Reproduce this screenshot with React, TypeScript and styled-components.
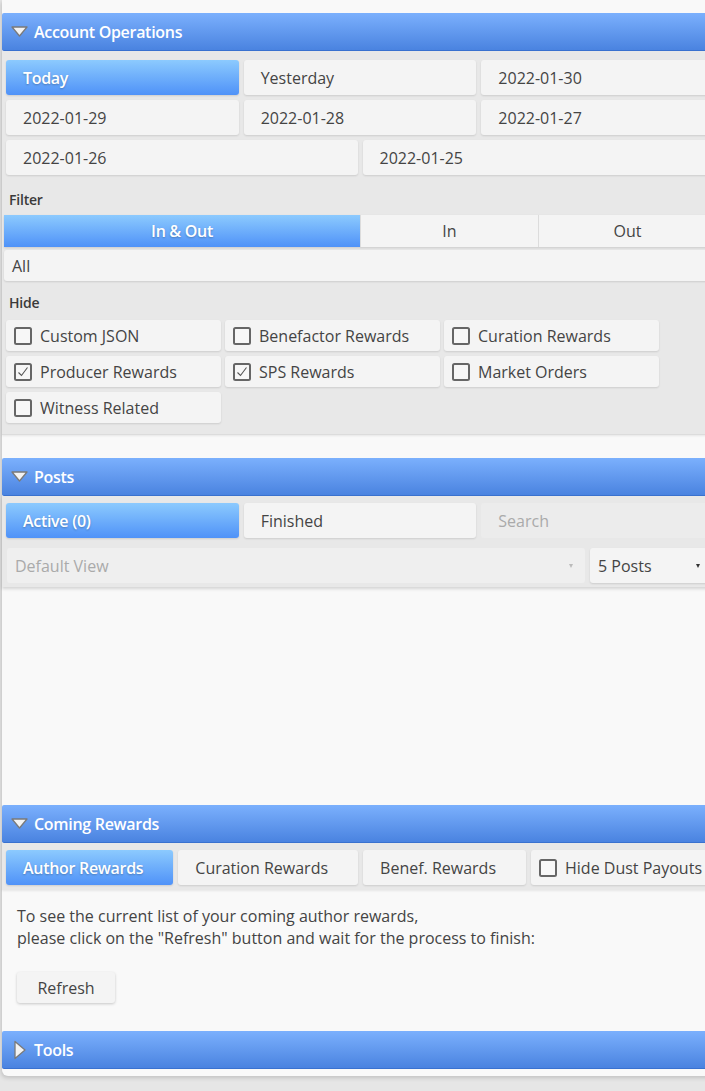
import React from 'react';
import styled, { createGlobalStyle } from 'styled-components';

const GlobalStyle = createGlobalStyle`
  html, body {
    margin: 0;
    padding: 0;
    background: #e6e6e6;
    overflow-x: hidden;
  }
  body {
    font-family: "Open Sans", "Noto Sans", "Liberation Sans", sans-serif;
    color: #444;
  }
`;

const Page = styled.div`
  width: 716px;
  margin-left: 2px;
  padding-top: 13px;
  background: #f9f9f9;
  border-radius: 0 0 6px 6px;
  box-shadow: -1px 2px 4px rgba(0, 0, 0, 0.16);
  padding-bottom: 7px;
  margin-bottom: 20px;
`;

const Header = styled.div`
  height: 37px;
  display: flex;
  align-items: center;
  gap: 5px;
  padding-left: 8px;
  background: linear-gradient(#7bb0fd, #4a83e0);
  border-bottom: 1px solid #3a72d0;
  border-radius: 2px 0 0 2px;
  color: #fff;
  font-size: 16px;
  font-weight: 600;
  letter-spacing: -0.3px;

  svg {
    flex: none;
    display: block;
  }
`;

const Section = styled.section<{ $gap?: number }>`
  margin-bottom: ${p => p.$gap ?? 0}px;
`;

const GrayBody = styled.div`
  background: #e8e8e8;
  padding: 9px 4px 11px 4px;
  border-bottom: 1px solid #dcdcdc;
  box-shadow: 0 1px 2px rgba(0, 0, 0, 0.08);
`;

const Grid = styled.div<{ $cols: number }>`
  display: grid;
  grid-template-columns: repeat(${p => p.$cols}, 1fr);
  gap: 5px;
  margin-bottom: 5px;
`;

const Btn = styled.button<{ $active?: boolean }>`
  height: 35px;
  border: none;
  border-radius: 3px;
  padding: 0 30px 0 17px;
  text-align: left;
  font-family: inherit;
  font-size: 16px;
  white-space: nowrap;
  color: ${p => (p.$active ? '#fff' : '#444')};
  font-weight: ${p => (p.$active ? 600 : 400)};
  text-shadow: ${p => (p.$active ? '0 1px 2px rgba(0,0,0,0.25)' : 'none')};
  letter-spacing: ${p => (p.$active ? '-0.3px' : '0')};
  background: ${p => (p.$active ? 'linear-gradient(#8ccafe, #4f92f8)' : '#f4f4f4')};
  box-shadow: 0 1px 2px rgba(0, 0, 0, 0.12);
`;

const Label = styled.div<{ $top: number; $bottom: number }>`
  font-size: 14px;
  line-height: 20px;
  font-weight: 600;
  color: #3a3a3a;
  padding: ${p => p.$top}px 0 ${p => p.$bottom}px 3px;
  letter-spacing: -0.2px;
`;

const FilterTabs = styled.div`
  display: grid;
  grid-template-columns: 2fr 1fr 1fr;
  margin: 0 -2px;
  box-shadow: 0 1px 2px rgba(0, 0, 0, 0.12);
`;

const FilterTab = styled.div<{ $active?: boolean }>`
  height: 32px;
  display: flex;
  align-items: center;
  justify-content: center;
  font-size: 16px;
  color: ${p => (p.$active ? '#fff' : '#444')};
  font-weight: ${p => (p.$active ? 600 : 400)};
  letter-spacing: ${p => (p.$active ? '-0.3px' : '0')};
  text-shadow: ${p => (p.$active ? '0 1px 2px rgba(0,0,0,0.25)' : 'none')};
  background: ${p => (p.$active ? 'linear-gradient(#8ccafe, #4f92f8)' : '#f4f4f4')};
  border-left: ${p => (p.$active ? 'none' : '1px solid #dcdcdc')};
`;

const Select = styled.div<{ $disabled?: boolean; $tall?: boolean }>`
  height: ${p => (p.$tall ? 35 : 31)}px;
  display: flex;
  align-items: center;
  justify-content: space-between;
  padding: 0 4px 0 8px;
  border-radius: 3px;
  font-size: 16px;
  background: ${p => (p.$disabled ? '#efefef' : '#f4f4f4')};
  color: ${p => (p.$disabled ? '#aaa' : '#444')};
  box-shadow: ${p => (p.$disabled ? 'none' : '0 1px 2px rgba(0,0,0,0.12)')};
`;

const FilterSelect = styled(Select)`
  margin: 3px -2px 0;
`;

const Caret = styled.span<{ $light?: boolean; $inset?: number }>`
  width: 0;
  height: 0;
  border-left: 2.5px solid transparent;
  border-right: 2.5px solid transparent;
  border-top: 4px solid ${p => (p.$light ? '#bbb' : '#333')};
  margin-right: ${p => p.$inset ?? 0}px;
`;

const CheckGrid = styled.div`
  display: grid;
  grid-template-columns: repeat(3, 215px);
  column-gap: 4px;
  row-gap: 5px;
`;

const CheckItem = styled.label`
  height: 31px;
  display: flex;
  align-items: center;
  gap: 8px;
  padding-left: 8px;
  background: #f4f4f4;
  border-radius: 3px;
  box-shadow: 0 1px 2px rgba(0, 0, 0, 0.12);
  font-size: 16px;
  color: #444;
  white-space: nowrap;
`;

const PostsBody = styled.div`
  background: #e8e8e8;
  padding: 7px 4px 4px;
  box-shadow: 0 2px 3px rgba(0, 0, 0, 0.15);
`;

const SearchBox = styled.div`
  height: 35px;
  display: flex;
  align-items: center;
  padding-left: 17px;
  background: #ececec;
  border-radius: 3px;
  font-size: 16px;
  color: #aaa;
`;

const SelectRow = styled.div`
  display: grid;
  grid-template-columns: 578px 1fr;
  gap: 5px;
  margin-top: 10px;
  padding-left: 1px;
`;

const PostsEmpty = styled.div`
  height: 218px;
`;

const TabStrip = styled.div`
  display: flex;
  gap: 5px;
  background: #e8e8e8;
  padding: 7px 4px 5px;
  box-shadow: 0 1px 2px rgba(0, 0, 0, 0.08);
`;

const DustCheck = styled(CheckItem)`
  height: 35px;
  width: 200px;
  flex: none;
`;

const RewardsText = styled.div`
  padding: 15px 15px 0;
  font-size: 16px;
  line-height: 22px;
  color: #444;
`;

const RefreshBtn = styled.button`
  margin: 23px 0 28px 15px;
  height: 31px;
  width: 98px;
  border: none;
  border-radius: 3px;
  background: #f4f4f4;
  box-shadow: 0 1px 3px rgba(0, 0, 0, 0.2);
  font-family: inherit;
  font-size: 16px;
  color: #444;
`;

const Arrow = ({ open }: { open: boolean }) =>
  open ? (
    <svg width="19" height="13" viewBox="0 0 19 13">
      <path d="M2 2 H17 L9.5 11 Z" fill="#f3f3f3" stroke="#7a7a7a" strokeWidth="1.3" strokeLinejoin="round" />
    </svg>
  ) : (
    <svg width="19" height="20" viewBox="0 0 19 20">
      <path d="M5 1.5 V18.5 L15 10 Z" fill="#f3f3f3" stroke="#7a7a7a" strokeWidth="1.3" strokeLinejoin="round" />
    </svg>
  );

const Box = ({ checked }: { checked?: boolean }) => (
  <svg width="18" height="18" viewBox="0 0 18 18">
    <rect x="1" y="1" width="16" height="16" rx="1.5" fill="#f7f7f7" stroke="#666" strokeWidth="2" />
    {checked && <path d="M4.5 9.5 L7.5 12.5 L13.5 4.5" fill="none" stroke="#555" strokeWidth="1.1" />}
  </svg>
);

const dates = ['Today', 'Yesterday', '2022-01-30', '2022-01-29', '2022-01-28', '2022-01-27'];

const hideItems: [string, boolean][] = [
  ['Custom JSON', false],
  ['Benefactor Rewards', false],
  ['Curation Rewards', false],
  ['Producer Rewards', true],
  ['SPS Rewards', true],
  ['Market Orders', false],
  ['Witness Related', false],
];

const App: React.FunctionComponent = () => (
  <>
    <GlobalStyle />
    <Page>
      <Section $gap={23}>
        <Header>
          <Arrow open />
          Account Operations
        </Header>
        <GrayBody>
          <Grid $cols={3}>
            {dates.map((d, i) => (
              <Btn key={d} $active={i === 0}>{d}</Btn>
            ))}
          </Grid>
          <Grid $cols={2}>
            <Btn>2022-01-26</Btn>
            <Btn>2022-01-25</Btn>
          </Grid>
          <Label $top={10} $bottom={5}>Filter</Label>
          <FilterTabs>
            <FilterTab $active>In &amp; Out</FilterTab>
            <FilterTab>In</FilterTab>
            <FilterTab>Out</FilterTab>
          </FilterTabs>
          <FilterSelect>
            All
            <Caret />
          </FilterSelect>
          <Label $top={12} $bottom={7}>Hide</Label>
          <CheckGrid>
            {hideItems.map(([name, checked]) => (
              <CheckItem key={name}>
                <Box checked={checked} />
                {name}
              </CheckItem>
            ))}
          </CheckGrid>
        </GrayBody>
      </Section>

      <Section>
        <Header>
          <Arrow open />
          Posts
        </Header>
        <PostsBody>
          <Grid $cols={3}>
            <Btn $active>Active (0)</Btn>
            <Btn>Finished</Btn>
            <SearchBox>Search</SearchBox>
          </Grid>
          <SelectRow>
            <Select $disabled $tall>
              Default View
              <Caret $light $inset={8} />
            </Select>
            <Select $tall>
              5 Posts
              <Caret $inset={10} />
            </Select>
          </SelectRow>
        </PostsBody>
        <PostsEmpty />
      </Section>

      <Section>
        <Header>
          <Arrow open />
          Coming Rewards
        </Header>
        <TabStrip>
          <Btn $active>Author Rewards</Btn>
          <Btn>Curation Rewards</Btn>
          <Btn>Benef. Rewards</Btn>
          <DustCheck>
            <Box />
            Hide Dust Payouts
          </DustCheck>
        </TabStrip>
        <RewardsText>
          To see the current list of your coming author rewards,
          <br />
          please click on the "Refresh" button and wait for the process to finish:
        </RewardsText>
        <RefreshBtn>Refresh</RefreshBtn>
      </Section>

      <Section>
        <Header>
          <Arrow open={false} />
          Tools
        </Header>
      </Section>
    </Page>
  </>
);

export default App;
